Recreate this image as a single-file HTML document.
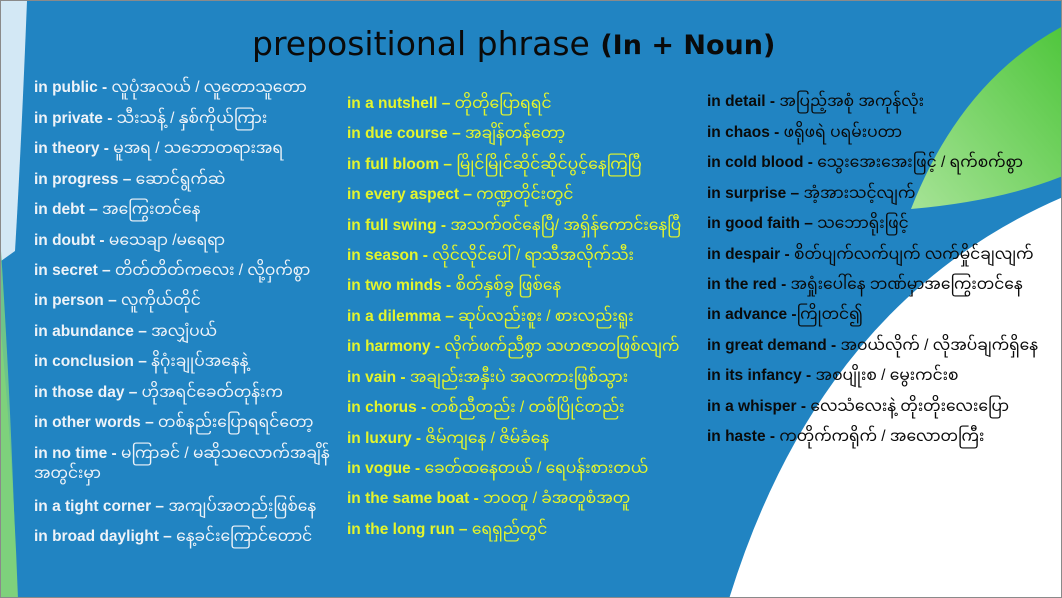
<!DOCTYPE html>
<html><head><meta charset="utf-8"><style>
*{margin:0;padding:0}
body{width:1062px;height:598px;overflow:hidden;background:#fff;font-family:"Liberation Sans","Noto Sans Myanmar","Padauk",sans-serif}
#s{position:absolute;left:0;top:0;width:1060px;height:596px;border:1px solid #8a8a8a;background:#2184c2;overflow:hidden}
.r{position:absolute;font-size:15.5px;font-weight:bold;white-space:nowrap;line-height:18px}
.r span{font-weight:normal}
.a{color:#eef3f8;left:33px}
.b{color:#e4f52c;left:346px}
.c{color:#0a0a0a;left:706px}
</style></head><body><div id="s">
<svg width="1062" height="598" style="position:absolute;left:0;top:0">
<defs><linearGradient id="g" x1="1" y1="0" x2="0" y2="1"><stop offset="0" stop-color="#4fc63c"/><stop offset="1" stop-color="#a6e396"/></linearGradient></defs>
<path d="M0 0 L26 0 Q20 150 14 250 L0 260 Z" fill="#d3e8f5"/>
<path d="M0 250 Q10 400 16 598 L0 598Z" fill="#6fc48a"/>
<path d="M0 330 Q12 460 17 598 L0 598Z" fill="#7ed17c"/>
<path d="M910 208 Q960 80 1062 25 L1062 175 Q1000 200 910 208Z" fill="url(#g)"/>
<path d="M728 598 Q820 300 1062 196 L1062 598Z" fill="#fff"/>
</svg>
<div style="position:absolute;left:251px;top:23px;font-family:'DejaVu Sans',sans-serif;font-size:33px;color:#0a0a0a;white-space:nowrap">prepositional phrase <b style="font-size:27px;position:relative;top:-1px">(In + Noun)</b></div>
<div class="r a" style="top:78px">in public - <span>လူပုံအလယ် / လူတောသူတော</span></div>
<div class="r a" style="top:109px">in private - <span>သီးသန့် / နှစ်ကိုယ်ကြား</span></div>
<div class="r a" style="top:139px">in theory - <span>မူအရ / သဘောတရားအရ</span></div>
<div class="r a" style="top:170px">in progress – <span>ဆောင်ရွက်ဆဲ</span></div>
<div class="r a" style="top:200px">in debt – <span>အကြွေးတင်နေ</span></div>
<div class="r a" style="top:231px">in doubt - <span>မသေချာ /မရေရာ</span></div>
<div class="r a" style="top:261px">in secret – <span>တိတ်တိတ်ကလေး / လို့ဝှက်စွာ</span></div>
<div class="r a" style="top:291px">in person – <span>လူကိုယ်တိုင်</span></div>
<div class="r a" style="top:322px">in abundance – <span>အလျှံပယ်</span></div>
<div class="r a" style="top:352px">in conclusion – <span>နိဂုံးချုပ်အနေနဲ့</span></div>
<div class="r a" style="top:383px">in those day – <span>ဟိုအရင်ခေတ်တုန်းက</span></div>
<div class="r a" style="top:413px">in other words – <span>တစ်နည်းပြောရရင်တော့</span></div>
<div class="r a" style="top:444px">in no time - <span>မကြာခင် / မဆိုသလောက်အချိန်</span></div>
<div class="r a" style="top:464px"><span>အတွင်းမှာ</span></div>
<div class="r a" style="top:497px">in a tight corner – <span>အကျပ်အတည်းဖြစ်နေ</span></div>
<div class="r a" style="top:527px">in broad daylight – <span>နေ့ခင်းကြောင်တောင်</span></div>

<div class="r b" style="top:94px">in a nutshell – <span>တိုတိုပြောရရင်</span></div>
<div class="r b" style="top:124px">in due course – <span>အချိန်တန်တော့</span></div>
<div class="r b" style="top:155px">in full bloom – <span>မြိုင်မြိုင်ဆိုင်ဆိုင်ပွင့်နေကြပြီ</span></div>
<div class="r b" style="top:185px">in every aspect – <span>ကဏ္ဍတိုင်းတွင်</span></div>
<div class="r b" style="top:216px">in full swing - <span>အသက်ဝင်နေပြီ/ အရှိန်ကောင်းနေပြီ</span></div>
<div class="r b" style="top:246px">in season - <span>လိုင်လိုင်ပေါ် / ရာသီအလိုက်သီး</span></div>
<div class="r b" style="top:276px">in two minds - <span>စိတ်နှစ်ခွ ဖြစ်နေ</span></div>
<div class="r b" style="top:307px">in a dilemma – <span>ဆုပ်လည်းစူး / စားလည်းရူး</span></div>
<div class="r b" style="top:337px">in harmony - <span>လိုက်ဖက်ညီစွာ သဟဇာတဖြစ်လျက်</span></div>
<div class="r b" style="top:368px">in vain - <span>အချည်းအနှီးပဲ အလကားဖြစ်သွား</span></div>
<div class="r b" style="top:398px">in chorus - <span>တစ်ညီတည်း / တစ်ပြိုင်တည်း</span></div>
<div class="r b" style="top:429px">in luxury - <span>ဇိမ်ကျနေ / ဇိမ်ခံနေ</span></div>
<div class="r b" style="top:459px">in vogue - <span>ခေတ်ထနေတယ် / ရေပန်းစားတယ်</span></div>
<div class="r b" style="top:489px">in the same boat - <span>ဘဝတူ / ခံအတူစံအတူ</span></div>
<div class="r b" style="top:520px">in the long run – <span>ရေရှည်တွင်</span></div>

<div class="r c" style="top:92px">in detail - <span>အပြည့်အစုံ အကုန်လုံး</span></div>
<div class="r c" style="top:123px">in chaos - <span>ဖရိုဖရဲ ပရမ်းပတာ</span></div>
<div class="r c" style="top:153px">in cold blood - <span>သွေးအေးအေးဖြင့် / ရက်စက်စွာ</span></div>
<div class="r c" style="top:184px">in surprise – <span>အံ့အားသင့်လျက်</span></div>
<div class="r c" style="top:214px">in good faith – <span>သဘောရိုးဖြင့်</span></div>
<div class="r c" style="top:245px">in despair - <span>စိတ်ပျက်လက်ပျက် လက်မှိုင်ချလျက်</span></div>
<div class="r c" style="top:275px">in the red - <span>အရှုံးပေါ်နေ ဘဏ်မှာအကြွေးတင်နေ</span></div>
<div class="r c" style="top:305px">in advance -<span>ကြိုတင်၍</span></div>
<div class="r c" style="top:336px">in great demand - <span>အဝယ်လိုက် / လိုအပ်ချက်ရှိနေ</span></div>
<div class="r c" style="top:366px">in its infancy - <span>အစပျိုးစ / မွေးကင်းစ</span></div>
<div class="r c" style="top:397px">in a whisper - <span>လေသံလေးနဲ့ တိုးတိုးလေးပြော</span></div>
<div class="r c" style="top:427px">in haste - <span>ကတိုက်ကရိုက် / အလောတကြီး</span></div>
</div></body></html>
